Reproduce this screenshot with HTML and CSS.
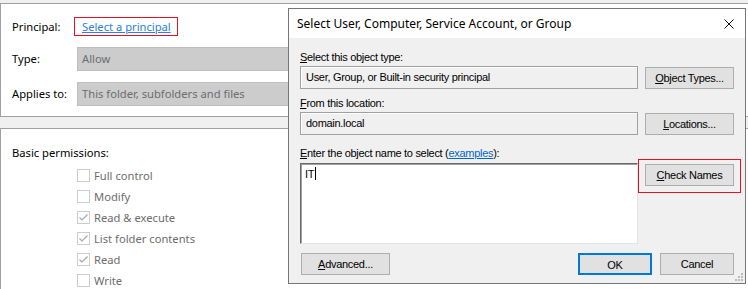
FILE: index.html
```html
<!DOCTYPE html>
<html>
<head>
<meta charset="utf-8">
<link rel="stylesheet" href="styles.css">
</head>
<body>
<div class="page">
  <section class="panel panel-top">
    <div class="form-grid">
      <span class="lbl">Principal:</span>
      <span class="row-principal"><span class="highlight"><a class="link" href="#">Select a principal</a></span></span>
      <span class="lbl">Type:</span>
      <span class="field-disabled">Allow</span>
      <span class="lbl">Applies to:</span>
      <span class="field-disabled">This folder, subfolders and files</span>
    </div>
  </section>
  <section class="panel panel-perms">
    <div class="perm-title">Basic permissions:</div>
    <ul class="perm-list">
      <li><span class="cb"></span>Full control</li>
      <li><span class="cb"></span>Modify</li>
      <li><span class="cb checked"><svg viewBox="0 0 13 13" width="13" height="13"><path d="M2.5 6.5 L5 9 L10.5 3.5" fill="none" stroke="#a8a8a8" stroke-width="1.2"/></svg></span>Read &amp; execute</li>
      <li><span class="cb checked"><svg viewBox="0 0 13 13" width="13" height="13"><path d="M2.5 6.5 L5 9 L10.5 3.5" fill="none" stroke="#a8a8a8" stroke-width="1.2"/></svg></span>List folder contents</li>
      <li><span class="cb checked"><svg viewBox="0 0 13 13" width="13" height="13"><path d="M2.5 6.5 L5 9 L10.5 3.5" fill="none" stroke="#a8a8a8" stroke-width="1.2"/></svg></span>Read</li>
      <li><span class="cb"></span>Write</li>
    </ul>
  </section>

  <div class="dialog">
    <div class="titlebar">
      <span class="title">Select User, Computer, Service Account, or Group</span>
      <svg class="close" viewBox="0 0 10 10" width="10" height="10"><path d="M0.5 0.5 L9.5 9.5 M9.5 0.5 L0.5 9.5" stroke="#111" stroke-width="1"/></svg>
    </div>
    <div class="dbody">
      <div class="dlabel first"><u>S</u>elect this object type:</div>
      <div class="drow">
        <div class="dfield">User, Group, or Built-in security principal</div>
        <button class="btn btn-side"><u>O</u>bject Types...</button>
      </div>
      <div class="dlabel second"><u>F</u>rom this location:</div>
      <div class="drow">
        <div class="dfield">domain.local</div>
        <button class="btn btn-side"><u>L</u>ocations...</button>
      </div>
      <div class="dlabel third"><u>E</u>nter the object name to select (<a class="ex" href="#">examples</a>):</div>
      <div class="drow drow-area">
        <div class="darea">IT<span class="caret"></span></div>
        <div class="check-wrap">
          <button class="btn btn-side"><u>C</u>heck Names</button>
          <span class="check-mark"></span>
        </div>
      </div>
      <div class="dfooter">
        <button class="btn btn-adv"><u>A</u>dvanced...</button>
        <div class="spacer"></div>
        <button class="btn btn-ok">OK</button>
        <button class="btn btn-cancel">Cancel</button>
      </div>
    </div>
    <svg class="grip" viewBox="0 0 8 8" width="8" height="8">
      <rect x="6" y="0" width="2" height="2" fill="#bcbcbc"/>
      <rect x="3" y="3" width="2" height="2" fill="#bcbcbc"/>
      <rect x="6" y="3" width="2" height="2" fill="#bcbcbc"/>
      <rect x="0" y="6" width="2" height="2" fill="#bcbcbc"/>
      <rect x="3" y="6" width="2" height="2" fill="#bcbcbc"/>
      <rect x="6" y="6" width="2" height="2" fill="#bcbcbc"/>
    </svg>
  </div>
</div>
</body>
</html>
```
FILE: styles.css
```css
* { box-sizing: border-box; }
html, body { margin: 0; padding: 0; }
body {
  background: #f0f0f0;
  width: 748px;
  height: 289px;
  overflow: hidden;
  font-family: "Noto Sans", "Liberation Sans", sans-serif;
  font-size: 12px;
  color: #000;
}
.page {
  position: relative;
  width: 748px;
  height: 289px;
  padding-top: 3px;
}
.panel {
  background: #fff;
  border: 1px solid #a0a0a0;
  width: 760px;
  font-size: 11.2px;
}
.panel-top {
  height: 114px;
  padding: 13px 0 0 11px;
}
.form-grid {
  display: grid;
  grid-template-columns: 65px 420px;
  grid-template-rows: 19px 24px 24px;
  row-gap: 11px;
  align-items: center;
}
.lbl { line-height: 16px; }
.row-principal { display: flex; }
.highlight {
  display: inline-flex;
  align-items: center;
  height: 19px;
  border: 1px solid #e81123;
  padding: 0 6px 0 7px;
  margin-left: -3px;
}
.link {
  color: #2a7ee6;
  text-decoration: underline;
  line-height: 14px;
}
.field-disabled {
  height: 24px;
  background: #cccccc;
  border: 1px solid #bfbfbf;
  color: #6d6d6d;
  padding: 0 4px;
  line-height: 22px;
}
.panel-perms {
  margin-top: 11px;
  height: 170px;
  padding: 16px 0 0 11px;
}
.perm-title { line-height: 16px; }
.perm-list {
  list-style: none;
  margin: 6px 0 0 65px;
  padding: 0;
  display: flex;
  flex-direction: column;
  gap: 5px;
  color: #6d6d6d;
}
.perm-list li {
  display: flex;
  align-items: center;
  gap: 4px;
  height: 16px;
}
.cb {
  width: 13px;
  height: 13px;
  border: 1px solid #cccccc;
  background: #fff;
  display: inline-flex;
  align-items: center;
  justify-content: center;
  flex: none;
}
.cb svg { display: block; margin: -1px; }

/* dialog window */
.dialog {
  position: absolute;
  left: 288px;
  top: 8px;
  width: 458px;
  height: 276px;
  border: 1px solid #767676;
  background: #f0f0f0;
  display: flex;
  flex-direction: column;
}
.titlebar {
  height: 29px;
  background: #fff;
  display: flex;
  align-items: center;
  justify-content: space-between;
  padding: 0 11px 0 8px;
  flex: none;
}
.title { font-size: 12px; line-height: 16px; }
.close { display: block; margin-top: 1px; }
.dbody {
  flex: 1;
  padding: 12px 11px 8px 11px;
  font-family: "Liberation Sans", Arial, sans-serif;
  font-size: 11px;
  letter-spacing: -0.3px;
  display: flex;
  flex-direction: column;
  position: relative;
}
.dlabel { line-height: 14px; }
.dlabel.first { margin-bottom: 2px; }
.dlabel.second { margin-top: 7px; margin-bottom: 2px; }
.dlabel.third { margin-top: 11px; margin-bottom: 3px; }
.ex { color: #0066cc; text-decoration: underline; }
.drow {
  display: grid;
  grid-template-columns: 338px 89px;
  column-gap: 7px;
  align-items: start;
}
.dfield {
  height: 23px;
  border: 1px solid #a0a0a0;
  background: #f0f0f0;
  box-shadow: inset 1px 1px 0 #fff;
  padding: 0 5px;
  line-height: 21px;
}
.btn {
  font-family: "Liberation Sans", Arial, sans-serif;
  font-size: 11px;
  letter-spacing: -0.3px;
  color: #000;
  background: #e1e1e1;
  border: 1px solid #adadad;
  height: 22px;
  padding: 0;
  margin: 0;
  line-height: 20px;
}
.btn-side { width: 89px; margin-top: 1px; }
.darea {
  height: 81px;
  background: #fff;
  border-top: 1px solid #696969;
  border-left: 1px solid #696969;
  border-right: 1px solid #e3e3e3;
  border-bottom: 1px solid #e3e3e3;
  box-shadow: inset 1px 1px 0 #a0a0a0;
  padding: 3px 4px;
  line-height: 14px;
  font-size: 11px;
}
.caret {
  display: inline-block;
  width: 1px;
  height: 13px;
  background: #000;
  vertical-align: -2px;
  margin-left: 1px;
}
.check-wrap { position: relative; }
.check-mark {
  position: absolute;
  left: -7px;
  top: -4px;
  width: 103px;
  height: 34px;
  border: 1px solid #e81123;
  pointer-events: none;
}
.dfooter {
  margin-top: 9px;
  display: flex;
  gap: 7px;
  align-items: center;
}
.btn-adv { width: 89px; margin-left: 1px; }
.spacer { flex: 1; }
.btn-ok {
  width: 74px;
  border: 2px solid #0078d7;
  margin-right: 1px;
}
.btn-cancel { width: 74px; }
.grip {
  position: absolute;
  right: 2px;
  bottom: 2px;
  display: block;
}
```
